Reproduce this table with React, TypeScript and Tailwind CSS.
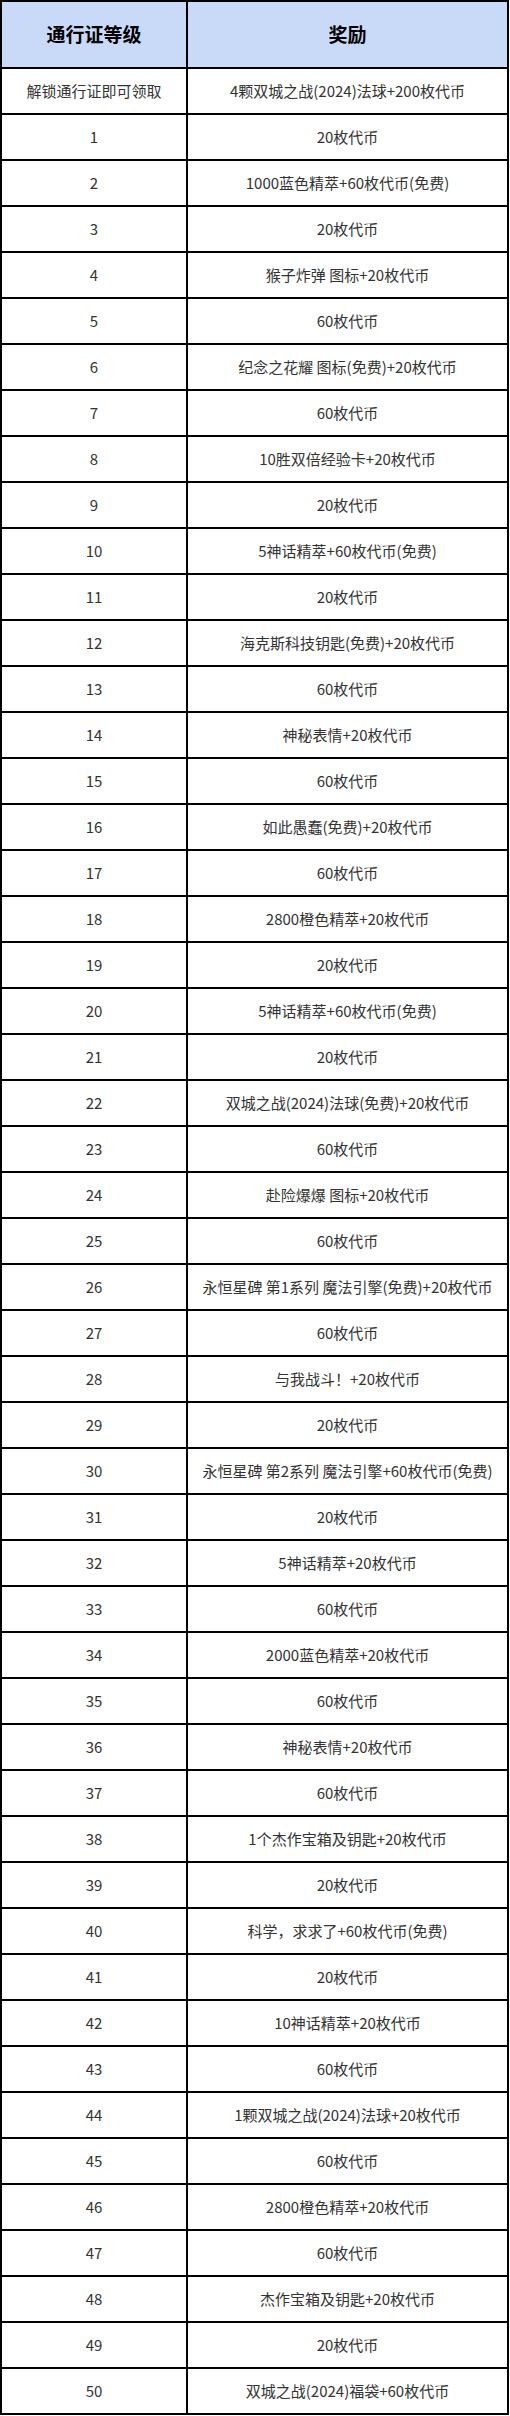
import React from "react";

const rows: [string, string][] = [
  ["解锁通行证即可领取", "4颗双城之战(2024)法球+200枚代币"],
  ["1", "20枚代币"],
  ["2", "1000蓝色精萃+60枚代币(免费)"],
  ["3", "20枚代币"],
  ["4", "猴子炸弹 图标+20枚代币"],
  ["5", "60枚代币"],
  ["6", "纪念之花耀 图标(免费)+20枚代币"],
  ["7", "60枚代币"],
  ["8", "10胜双倍经验卡+20枚代币"],
  ["9", "20枚代币"],
  ["10", "5神话精萃+60枚代币(免费)"],
  ["11", "20枚代币"],
  ["12", "海克斯科技钥匙(免费)+20枚代币"],
  ["13", "60枚代币"],
  ["14", "神秘表情+20枚代币"],
  ["15", "60枚代币"],
  ["16", "如此愚蠢(免费)+20枚代币"],
  ["17", "60枚代币"],
  ["18", "2800橙色精萃+20枚代币"],
  ["19", "20枚代币"],
  ["20", "5神话精萃+60枚代币(免费)"],
  ["21", "20枚代币"],
  ["22", "双城之战(2024)法球(免费)+20枚代币"],
  ["23", "60枚代币"],
  ["24", "赴险爆爆 图标+20枚代币"],
  ["25", "60枚代币"],
  ["26", "永恒星碑 第1系列 魔法引擎(免费)+20枚代币"],
  ["27", "60枚代币"],
  ["28", "与我战斗！+20枚代币"],
  ["29", "20枚代币"],
  ["30", "永恒星碑 第2系列 魔法引擎+60枚代币(免费)"],
  ["31", "20枚代币"],
  ["32", "5神话精萃+20枚代币"],
  ["33", "60枚代币"],
  ["34", "2000蓝色精萃+20枚代币"],
  ["35", "60枚代币"],
  ["36", "神秘表情+20枚代币"],
  ["37", "60枚代币"],
  ["38", "1个杰作宝箱及钥匙+20枚代币"],
  ["39", "20枚代币"],
  ["40", "科学，求求了+60枚代币(免费)"],
  ["41", "20枚代币"],
  ["42", "10神话精萃+20枚代币"],
  ["43", "60枚代币"],
  ["44", "1颗双城之战(2024)法球+20枚代币"],
  ["45", "60枚代币"],
  ["46", "2800橙色精萃+20枚代币"],
  ["47", "60枚代币"],
  ["48", "杰作宝箱及钥匙+20枚代币"],
  ["49", "20枚代币"],
  ["50", "双城之战(2024)福袋+60枚代币"],
];

export default function App() {
  return (
    <div
      className="bg-white min-h-[2416px]"
      style={{ fontFamily: '"Noto Sans CJK SC", "Noto Sans", sans-serif' }}
    >
      <div className="w-[509px] border-2 border-black">
        <div className="flex h-[65px] bg-[#c9daf8] text-[19px] font-bold text-black">
          <div className="w-[184px] flex items-center justify-center">通行证等级</div>
          <div className="flex-1 border-l-2 border-black flex items-center justify-center">奖励</div>
        </div>
        {rows.map(([a, b], i) => (
          <div key={i} className="flex h-[46px] border-t-2 border-black text-[15px] text-[#333333]">
            <div className="w-[184px] flex items-center justify-center">{a}</div>
            <div className="flex-1 border-l-2 border-black flex items-center justify-center whitespace-nowrap">
              {b}
            </div>
          </div>
        ))}
      </div>
    </div>
  );
}
